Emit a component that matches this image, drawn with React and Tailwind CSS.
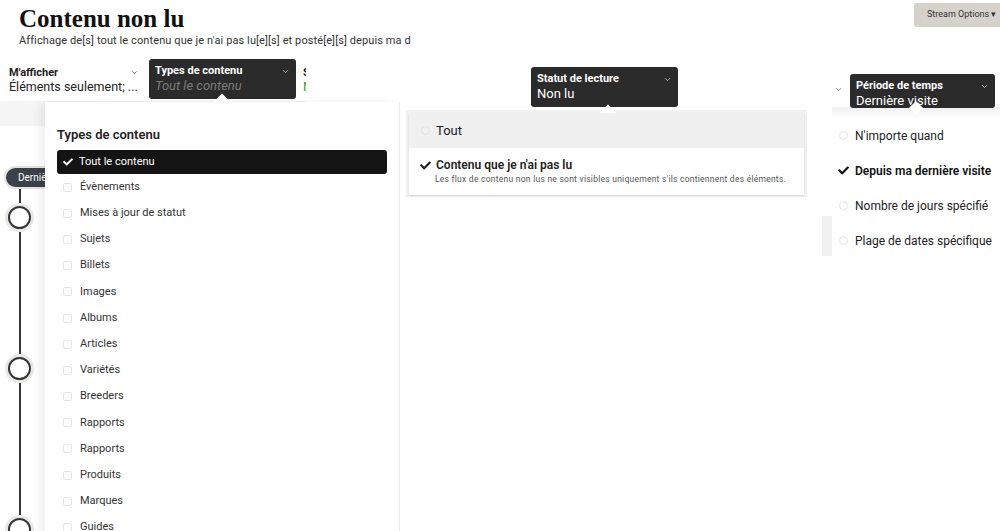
import { ChevronDown } from "lucide-react";

const contentTypes = [
  "Évènements",
  "Mises à jour de statut",
  "Sujets",
  "Billets",
  "Images",
  "Albums",
  "Articles",
  "Variétés",
  "Breeders",
  "Rapports",
  "Rapports",
  "Produits",
  "Marques",
  "Guides",
];

const periods = [
  { label: "N'importe quand", active: false },
  { label: "Depuis ma dernière visite", active: true },
  { label: "Nombre de jours spécifié", active: false },
  { label: "Plage de dates spécifique", active: false },
];

// solid check mark, same shape as the theme's icon font
const Tick = ({ size = 11, className = "" }) => (
  <svg viewBox="0 0 512 512" width={size} height={size} className={className} fill="currentColor">
    <path d="M173.898 439.404l-166.4-166.4c-9.997-9.997-9.997-26.206 0-36.204l36.203-36.204c9.997-9.998 26.207-9.998 36.204 0L192 312.69 432.095 72.596c9.997-9.997 26.207-9.997 36.204 0l36.203 36.204c9.997 9.997 9.997 26.206 0 36.204l-294.4 294.401c-9.998 9.997-26.207 9.997-36.204-.001z" />
  </svg>
);

// dark filter button with the little pointer of its open menu
const FilterButton = ({ title, value, italic, className }) => (
  <div className={`absolute rounded-[3px] bg-[#2b2b2b] px-[6px] ${className}`}>
    <div className="flex items-center justify-between">
      <span className="text-[11px] font-bold leading-[14px] text-white">{title}</span>
      <ChevronDown size={9} strokeWidth={2} className="text-gray-300" />
    </div>
    <div
      className={`text-[13px] leading-[16px] ${italic ? "italic text-[#7a7a7a]" : "text-white"}`}
    >
      {value}
    </div>
  </div>
);

const Radio = () => (
  <span className="inline-block h-[9px] w-[9px] rounded-full border border-[#e3e3e3]" />
);

const Box = () => <span className="inline-block h-[9px] w-[9px] rounded-[2px] border border-[#e6e6e6]" />;

const TimelineDot = () => (
  <div className="h-[29px] w-[29px] shrink-0 rounded-full bg-[#ebe8e3] p-[3px]">
    <div className="h-full w-full rounded-full border-2 border-[#33363b] bg-white" />
  </div>
);

const Segment = ({ className }) => <div className={`w-[2px] shrink-0 bg-[#33363b] ${className}`} />;

export default function App() {
  return (
    <div
      className="relative h-[531px] w-[1000px] overflow-hidden bg-white text-[#222]"
      style={{ fontFamily: "Roboto, 'Liberation Sans', sans-serif" }}
    >
      {/* header */}
      <div className="flex items-start justify-between">
        <div className="pl-[19px] pt-[4px]">
          <h1
            className="text-[25px] font-bold leading-[30px] text-[#111]"
            style={{ fontFamily: "'Liberation Serif', serif" }}
          >
            Contenu non lu
          </h1>
          <p className="w-[392px] overflow-hidden whitespace-nowrap text-[11px] leading-[13px] tracking-[0.1px] text-[#333]">
            Affichage de[s] tout le contenu que je n'ai pas lu[e][s] et posté[e][s] depuis ma d
          </p>
        </div>
        <button className="mt-[3px] h-[24px] w-[86px] shrink-0 rounded-l-[3px] bg-[#d5d2cb] pl-[13px] text-left text-[9px] text-[#333]">
          Stream Options ▾
        </button>
      </div>

      {/* filter bar */}
      <div className="mt-[14px] flex h-[40px] w-[306px] items-start">
        <div className="w-[141px] shrink-0 pl-[9px] pt-[5px]">
          <div className="flex items-center justify-between pr-[2px]">
            <span className="text-[11px] font-bold leading-[13px]">M'afficher</span>
            <ChevronDown size={9} strokeWidth={2} className="text-gray-500" />
          </div>
          <div className="whitespace-nowrap text-[12.5px] leading-[16px]">Éléments seulement; ...</div>
        </div>
        <div className="ml-auto w-[3px] overflow-hidden pt-[5px]">
          <div className="text-[11px] font-bold leading-[13px]">S</div>
          <div className="text-[13px] leading-[16px] text-[#3a9d23]">N</div>
        </div>
      </div>
      <div className="h-[25px] w-[306px] bg-[#f5f5f5]" />

      {/* stream timeline */}
      <div className="mt-[40px] flex flex-col items-start pl-[4px]">
        <div className="rounded-full border-2 border-[#e6e3de] bg-[#3c4048] py-[2px] pl-[12px] pr-[30px] text-[10px] text-white">
          Dernière visite
        </div>
        <div className="flex w-[31px] flex-col items-center">
          <Segment className="h-[14px]" />
          <TimelineDot />
          <Segment className="h-[122px]" />
          <TimelineDot />
          <Segment className="h-[132px]" />
          <TimelineDot />
        </div>
      </div>

      {/* content types */}
      <FilterButton
        title="Types de contenu"
        value="Tout le contenu"
        italic
        className="left-[149px] top-[59px] h-[40px] w-[147px] pt-[5px]"
      />
      <div className="absolute left-[45px] top-[102px] h-[440px] w-[355px] border-r border-[#eeeeee] bg-white shadow-[-6px_0_8px_rgba(0,0,0,0.06)]">
        <div className="absolute -top-[6px] left-[171px] h-[12px] w-[12px] rotate-45 bg-white" />
        <div className="px-[12px] pt-[25px]">
          <div className="text-[13px] font-semibold leading-[16px] text-[#222]">Types de contenu</div>
          <div className="mt-[7px] flex h-[24px] items-center gap-[6px] rounded-[3px] bg-[#141414] pl-[6px] text-[11px] text-white">
            <Tick size={10} />
            Tout le contenu
          </div>
          {contentTypes.map((label, i) => (
            <div key={i} className="flex h-[26.2px] items-center gap-[8px] pl-[6px] text-[11px] text-[#333]">
              <Box />
              {label}
            </div>
          ))}
        </div>
      </div>

      {/* read status */}
      <FilterButton
        title="Statut de lecture"
        value="Non lu"
        className="left-[531px] top-[67px] h-[40px] w-[147px] pt-[5px]"
      />
      <div className="absolute left-[406px] top-[110px] w-[401px] bg-[#f2f2f2] p-[3px] pb-[2px]">
        <div className="relative bg-white shadow-[0_1px_2px_rgba(0,0,0,0.12)]">
          <div className="absolute -top-[6px] left-[193px] h-[12px] w-[12px] rotate-45 bg-white" />
          <div className="relative flex h-[35px] items-center gap-[6px] bg-[#f0f0f0] pl-[12px] text-[13px]">
            <Radio />
            Tout
          </div>
          <div className="px-[11px] pb-[10px] pt-[10px]">
            <div className="flex items-center gap-[5px] text-[12px] font-semibold leading-[15px]">
              <Tick size={11} />
              Contenu que je n'ai pas lu
            </div>
            <div className="pl-[15px] text-[8.5px] leading-[12px] tracking-[0.25px] text-[#555]">
              Les flux de contenu non lus ne sont visibles uniquement s'ils contiennent des éléments.
            </div>
          </div>
        </div>
      </div>

      {/* time period */}
      <ChevronDown size={9} strokeWidth={2} className="absolute left-[834px] top-[85px] text-gray-500" />
      <div className="absolute left-[832px] top-[107px] h-[12px] w-[168px] bg-gradient-to-b from-[#f0f0f0] to-white" />
      <div className="absolute left-[822px] top-[216px] h-[40px] w-[10px] bg-[#f1f1f1]" />
      <FilterButton
        title="Période de temps"
        value="Dernière visite"
        className="left-[850px] top-[74px] h-[34px] w-[145px] pt-[5px] leading-none"
      />
      <div className="absolute left-[837px] top-[118px] w-[170px]">
        <div className="absolute -top-[15px] left-[74px] h-[10px] w-[10px] rotate-45 bg-white" />
        {periods.map((p) => (
          <div
            key={p.label}
            className={`flex h-[35px] items-center gap-[6px] whitespace-nowrap text-[12px] ${
              p.active ? "font-semibold text-[#111]" : "text-[#222]"
            }`}
          >
            <span className="flex w-[12px] justify-center">
              {p.active ? <Tick size={11} /> : <Radio />}
            </span>
            {p.label}
          </div>
        ))}
      </div>
    </div>
  );
}
